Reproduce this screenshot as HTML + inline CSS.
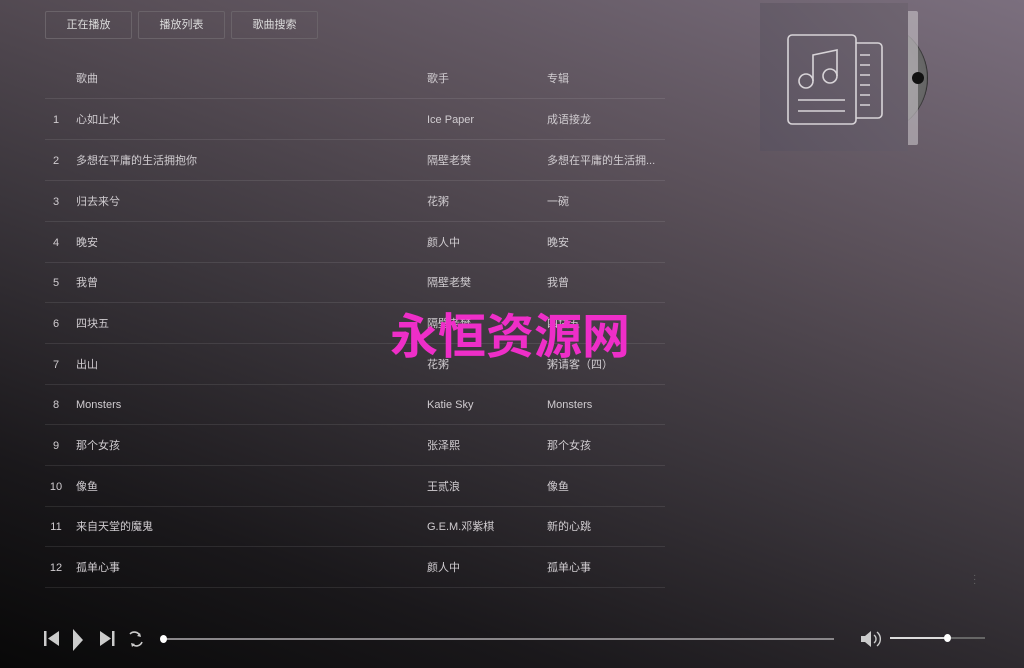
<!DOCTYPE html>
<html><head><meta charset="utf-8"><style>
*{margin:0;padding:0;box-sizing:border-box}
body{width:1024px;height:668px;overflow:hidden;font-family:"Liberation Sans","Noto Sans CJK SC",sans-serif;font-size:11px;color:#ddd;
background:linear-gradient(200deg,#7b6f7e 0%,#5a5059 30%,#3a353b 55%,#1a181b 80%,#080808 100%);position:relative}
.btn{position:absolute;top:11px;height:28px;border:1px solid #6a6369;border-radius:2px;color:#ddd;text-align:center;line-height:26px;font-size:11px}
.row{position:absolute;left:45px;width:620px;height:41px;border-bottom:1px solid rgba(255,255,255,0.09)}
.row span{position:absolute;top:14px;height:14px;line-height:14px;color:#d0ccd0;white-space:nowrap}
.n{left:0;width:22px;text-align:center}
.s{left:31px}.g{left:382px}.a{left:502px}
.wm{position:absolute;left:390px;top:302px;font-family:"Noto Sans CJK SC",sans-serif;font-weight:bold;font-size:48px;line-height:60px;color:#ee2ec8}
</style></head><body>
<div class="btn" style="left:45px;width:87px">正在播放</div>
<div class="btn" style="left:138px;width:87px">播放列表</div>
<div class="btn" style="left:231px;width:87px">歌曲搜索</div>

<div class="row" style="top:58px"><span class="s">歌曲</span><span class="g">歌手</span><span class="a">专辑</span></div>
<div class="row" style="top:99px"><span class="n">1</span><span class="s">心如止水</span><span class="g">Ice Paper</span><span class="a">成语接龙</span></div>
<div class="row" style="top:140px"><span class="n">2</span><span class="s">多想在平庸的生活拥抱你</span><span class="g">隔壁老樊</span><span class="a">多想在平庸的生活拥...</span></div>
<div class="row" style="top:181px"><span class="n">3</span><span class="s">归去来兮</span><span class="g">花粥</span><span class="a">一碗</span></div>
<div class="row" style="top:222px"><span class="n">4</span><span class="s">晚安</span><span class="g">颜人中</span><span class="a">晚安</span></div>
<div class="row" style="top:262px"><span class="n">5</span><span class="s">我曾</span><span class="g">隔壁老樊</span><span class="a">我曾</span></div>
<div class="row" style="top:303px"><span class="n">6</span><span class="s">四块五</span><span class="g">隔壁老樊</span><span class="a">四块五</span></div>
<div class="row" style="top:344px"><span class="n">7</span><span class="s">出山</span><span class="g">花粥</span><span class="a">粥请客（四）</span></div>
<div class="row" style="top:384px"><span class="n">8</span><span class="s">Monsters</span><span class="g">Katie Sky</span><span class="a">Monsters</span></div>
<div class="row" style="top:425px"><span class="n">9</span><span class="s">那个女孩</span><span class="g">张泽熙</span><span class="a">那个女孩</span></div>
<div class="row" style="top:466px"><span class="n">10</span><span class="s">像鱼</span><span class="g">王贰浪</span><span class="a">像鱼</span></div>
<div class="row" style="top:506px"><span class="n">11</span><span class="s">来自天堂的魔鬼</span><span class="g">G.E.M.邓紫棋</span><span class="a">新的心跳</span></div>
<div class="row" style="top:547px"><span class="n">12</span><span class="s">孤单心事</span><span class="g">颜人中</span><span class="a">孤单心事</span></div>

<div class="wm">永恒资源网</div>

<!-- album art -->
<div style="position:absolute;left:870px;top:22px;width:58px;height:112px;border-radius:0 56px 56px 0;background:radial-gradient(circle at 0 50%,#777 0,#666 70%,#151515 72%,#151515 100%)"></div>
<div style="position:absolute;left:906px;top:11px;width:12px;height:134px;background:rgba(200,195,200,0.6);border-radius:2px"></div>
<div style="position:absolute;left:912px;top:72px;width:12px;height:12px;border-radius:50%;background:#111"></div>
<div style="position:absolute;left:760px;top:3px;width:148px;height:148px;background:linear-gradient(225deg,#6e6470,#5b5360)"></div>
<svg style="position:absolute;left:760px;top:3px" width="148" height="148" viewBox="0 0 148 148" fill="none" stroke="#d8d4d8" stroke-width="1.6">
<rect x="28" y="32" width="68" height="89" rx="4"/>
<path d="M96 40h22a4 4 0 0 1 4 4v67a4 4 0 0 1-4 4h-22"/>
<path d="M100 52h10M100 62h10M100 72h10M100 82h10M100 92h10M100 102h10"/>
<circle cx="46" cy="78" r="7"/><circle cx="70" cy="73" r="7"/>
<path d="M53 78V52l24-5v26"/>
<path d="M38 97h47M38 108h47"/>
</svg>
<div style="position:absolute;left:973px;top:574px;color:#666;font-size:10px;line-height:4px">·<br>·<br>·</div>

<!-- controls -->
<svg style="position:absolute;left:42px;top:628px" width="110" height="24" viewBox="0 0 110 24" fill="#ccc">
<rect x="2" y="3" width="2.5" height="15"/><path d="M17 3v15L6 10.5z"/>
<path d="M31 1v22l10-11z"/>
<path d="M58 3v15l11-7.5z"/><rect x="70" y="3" width="2.5" height="15"/>
<path d="M88 6a6 6 0 0 1 10 2M100 14a6 6 0 0 1-10 2" fill="none" stroke="#ccc" stroke-width="1.6"/>
<path d="M98 5l1 4-4-1z M90 19l-1-4 4 1z"/>
</svg>
<div style="position:absolute;left:163px;top:638px;width:671px;height:2px;background:#8a878a"></div>
<div style="position:absolute;left:160px;top:635px;width:7px;height:8px;border-radius:50%;background:#fff"></div>
<svg style="position:absolute;left:860px;top:629px" width="24" height="20" viewBox="0 0 24 20" fill="#ccc">
<path d="M1 7h4l6-5v16l-6-5H1z"/><path d="M14 6a5 5 0 0 1 0 8M17 3a9 9 0 0 1 0 14" fill="none" stroke="#ccc" stroke-width="1.4"/>
</svg>
<div style="position:absolute;left:890px;top:637px;width:95px;height:2px;background:#666"></div>
<div style="position:absolute;left:890px;top:637px;width:57px;height:2px;background:#ddd"></div>
<div style="position:absolute;left:944px;top:634px;width:7px;height:8px;border-radius:50%;background:#fff"></div>
</body></html>
